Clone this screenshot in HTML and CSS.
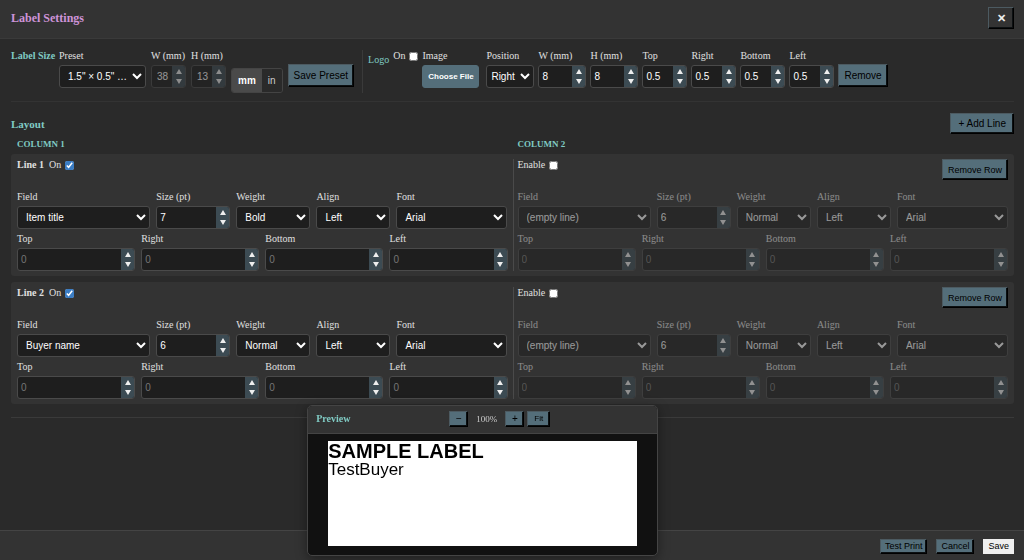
FILE: index.html
```html
<!DOCTYPE html>
<html lang="en">
<head>
    <meta charset="UTF-8">
    <meta name="viewport" content="width=device-width, initial-scale=1.0">
    <title>Label Settings</title>
    <link rel="stylesheet" href="styles.css">
</head>
<body>
    <header class="header">
        <h1>Label Settings</h1>
        <button type="button" class="btn close" aria-label="Close">✕</button>
    </header>

    <main class="content">
        <section class="toolbar">
            <h2 class="group-title">Label Size</h2>
            <div class="field preset">
                <label for="preset">Preset</label>
                <select id="preset"><option>1.5" × 0.5" (38 × 13 mm)</option></select>
            </div>
            <div class="field small disabled-input">
                <label for="labelW">W (mm)</label>
                <div class="number">
                    <input type="number" id="labelW" value="38" disabled>
                    <div class="spin"><button type="button" class="up" aria-label="Increase" disabled></button><button type="button" class="down" aria-label="Decrease" disabled></button></div>
                </div>
            </div>
            <div class="field small disabled-input">
                <label for="labelH">H (mm)</label>
                <div class="number">
                    <input type="number" id="labelH" value="13" disabled>
                    <div class="spin"><button type="button" class="up" aria-label="Increase" disabled></button><button type="button" class="down" aria-label="Decrease" disabled></button></div>
                </div>
            </div>
            <div class="units">
                <button type="button" class="active">mm</button>
                <button type="button">in</button>
            </div>
            <button type="button" class="btn tall">Save Preset</button>

            <div class="logo">
                <h2 class="logo-title">Logo</h2>
                <div class="check">
                    <label for="logoOn">On</label>
                    <input type="checkbox" id="logoOn">
                </div>
                <div class="field image">
                    <label for="logoFile">Image</label>
                    <button type="button" class="file" id="logoFile">Choose File</button>
                </div>
                <div class="field position">
                    <label for="logoPos">Position</label>
                    <select id="logoPos"><option>Right</option><option>Left</option></select>
                </div>
                <div class="logo-numbers" id="logoNumbers"></div>
                <button type="button" class="btn tall">Remove</button>
            </div>
        </section>

        <section class="layout">
            <div class="layout-head">
                <h2>Layout</h2>
                <button type="button" class="btn add">+ Add Line</button>
            </div>
            <div class="column-names">
                <h3>COLUMN 1</h3>
                <h3>COLUMN 2</h3>
            </div>
            <div class="lines" id="lines"></div>
        </section>
    </main>

    <footer class="footer">
        <button type="button" class="btn">Test Print</button>
        <button type="button" class="btn">Cancel</button>
        <button type="button" class="btn save">Save</button>
    </footer>

    <div class="preview">
        <div class="preview-head">
            <h2>Preview</h2>
            <div class="zoom">
                <button type="button" class="btn">−</button>
                <span>100%</span>
                <button type="button" class="btn">+</button>
                <button type="button" class="btn fit">Fit</button>
            </div>
        </div>
        <div class="preview-body">
            <div class="paper">
                <p class="sample-title">SAMPLE LABEL</p>
                <p class="sample-buyer">TestBuyer</p>
            </div>
        </div>
    </div>

    <script src="script.js"></script>
</body>
</html>
```
FILE: styles.css
```css
* { box-sizing: border-box; }
body { margin: 0; min-height: 100vh; display: flex; flex-direction: column; background: #2a2a2a; color: #e0e0e0; font-family: "Liberation Serif", serif; font-size: 10px; line-height: 12px; }
h1, h2, h3, p { margin: 0; }
h2 { font-size: 10px; color: #80cbc4; }
button, input, select { font-family: "Liberation Sans", Arial, sans-serif; font-size: 10px; margin: 0; }

.header { display: flex; justify-content: space-between; align-items: center; height: 39px; padding: 0 10px 2px 11px; background: #333; border-bottom: 1px solid #3a3a3a; }
.header h1 { font-size: 12px; color: #ce93d8; }

/* Buttons */
.btn { background: #546e7a; color: #000; border: 1px solid; border-color: #4c5a61 #000 #000 #4c5a61; box-shadow: inset -1px -1px #0c1012; padding: 0 5px; cursor: pointer; }
.btn.tall { height: 23px; }
.btn.add { height: 21px; padding: 0 7px; }
.btn.close { width: 26px; height: 22px; padding: 0; background: #333; color: #eee; font-size: 11px; font-weight: bold; }
.btn.remove-row { height: 21px; padding: 0 5px; font-size: 9px; }

/* Fields */
.field { display: flex; flex-direction: column; gap: 3px; min-width: 0; }
.field select, .number, .file { width: 100%; height: 23px; border: 1px solid #4a4a4a; border-radius: 3px; background: #1e1e1e; color: #fff; }
.field select { padding: 0 0 0 4px; text-overflow: ellipsis; }
.number { display: flex; overflow: hidden; }
.number input { flex: 1; width: 0; min-width: 0; padding: 0 3px; border: none; background: none; color: #fff; appearance: textfield; }
.number input::-webkit-inner-spin-button { appearance: none; }
.number input::placeholder { color: #757575; }
.spin { display: flex; flex-direction: column; width: 13px; }
.spin button { flex: 1; display: flex; align-items: center; justify-content: center; padding: 0; border: none; background: #3c4b53; }
.spin button::before { content: ""; border: 3px solid transparent; }
.spin .up::before { border-top: none; border-bottom: 5px solid #eee; }
.spin .down::before { border-bottom: none; border-top: 5px solid #eee; }
.disabled-input .number { opacity: 0.5; }
.disabled-input input { padding: 0 0 0 5px; }
.file { padding: 0; background: #546e7a; border-color: #546e7a; font-size: 8px; font-weight: bold; }
input[type="checkbox"] { width: 9px; height: 9px; accent-color: #3b7dc4; }
.check { display: flex; align-items: center; gap: 4px; height: 12px; }

/* Top bar */
.content { flex: 1; padding: 11px 10px 0 11px; }
.toolbar { display: flex; gap: 5px; height: 52px; border-bottom: 1px solid #333; }
.toolbar > .btn, .logo > .btn { margin-top: 14px; }
.group-title { width: 43px; white-space: nowrap; }
.preset { width: 87px; }
.small { width: 35px; }
.units { display: flex; height: 25px; margin-top: 18px; border: 1px solid #444; border-radius: 3px; overflow: hidden; }
.units button { padding: 0 6px; border: none; background: #2a2a2a; color: #ccc; }
.units .active { background: #4a4a4a; color: #fff; font-weight: bold; }
.logo { display: flex; gap: 4px; height: 43px; margin-left: 3px; padding-left: 5px; border-left: 1px solid #3a3a3a; }
.logo-title { padding-top: 4px; font-weight: normal; }
.image { width: 57px; margin-right: 3px; }
.position { width: 48px; }
.position select { padding: 0; }
.logo-numbers { display: flex; gap: 4px; }
.logo-numbers .field { width: 45px; }
.logo-numbers .size { width: 48px; }

/* Lines */
.layout { padding: 11px 0 13px; border-bottom: 1px solid #3a3a3a; }
.layout-head { display: flex; justify-content: space-between; align-items: center; }
.layout-head h2 { font-size: 11px; }
.column-names { display: grid; grid-template-columns: 1fr 1fr; padding: 4px 6px; }
.column-names h3 { font-size: 9px; color: #80cbc4; }
.column-names h3 + h3 { padding-left: 5px; }
.lines { display: flex; flex-direction: column; gap: 6px; }
.line { display: grid; grid-template-columns: 1fr 1fr; padding: 5px 6px; background: #333; border-radius: 3px; }
.column { padding-right: 5px; }
.column + .column { padding: 0 0 0 4px; border-left: 1px solid #4a4a4a; }
.column-head { display: flex; justify-content: space-between; align-items: flex-start; height: 32px; }
.column-head b { margin-right: 1px; }
.row { display: grid; grid-template-columns: 1.8fr 1fr 1fr 1fr 1.5fr; gap: 6px; }
.row.offsets { grid-template-columns: repeat(4, 1fr); margin-top: 4px; }
.column.off .row { opacity: 0.5; }

.footer { display: flex; justify-content: flex-end; align-items: center; gap: 9px; height: 30px; padding: 2px 10px 0; background: #333; border-top: 1px solid #444; }
.footer .btn { height: 15px; padding: 0 4px; font-size: 9px; line-height: 11px; }
.footer .save { background: #efefef; border-color: #efefef; box-shadow: none; }

/* Floating preview window */
.preview { position: fixed; left: 30%; bottom: 4px; width: 351px; border: 1px solid #444; border-radius: 5px; overflow: hidden; background: #111; box-shadow: 0 3px 12px rgba(0, 0, 0, 0.4); }
.preview-head { display: flex; align-items: center; height: 28px; padding: 0 8px 2px; background: #333; border-bottom: 1px solid #444; }
.zoom { flex: 1; display: flex; align-items: center; justify-content: center; gap: 3px; }
.zoom .btn { width: 19px; height: 16px; padding: 0; line-height: 10px; }
.zoom .fit { width: 23px; font-size: 8px; }
.zoom span { padding: 0 5px; font-size: 9px; color: #ccc; }
.preview-body { padding: 7px 20px 9px; }
.paper { height: 105px; background: #fff; color: #000; font-family: "Liberation Sans", Arial, sans-serif; }
.sample-title { font-size: 20px; line-height: 20px; font-weight: bold; }
.sample-buyer { font-size: 17px; line-height: 18px; }
```
FILE: script.js
```js
const lines = [
    { field: 'Item title', size: 7, weight: 'Bold' },
    { field: 'Buyer name', size: 6, weight: 'Normal' }
];

function numberField(id, label, value, cls) {
    const attr = value === '' ? 'placeholder="0"' : `value="${value}"`;
    return `
        <div class="field ${cls}">
            <label for="${id}">${label}</label>
            <div class="number">
                <input type="number" id="${id}" step="any" ${attr}>
                <div class="spin"><button type="button" class="up" aria-label="Increase"></button><button type="button" class="down" aria-label="Decrease"></button></div>
            </div>
        </div>`;
}

function selectField(id, label, value) {
    return `
        <div class="field">
            <label for="${id}">${label}</label>
            <select id="${id}"><option>${value}</option></select>
        </div>`;
}

function rows(id, line) {
    return `
        <div class="row">
            ${selectField(id + 'Field', 'Field', line.field)}
            ${numberField(id + 'Size', 'Size (pt)', line.size, '')}
            ${selectField(id + 'Weight', 'Weight', line.weight)}
            ${selectField(id + 'Align', 'Align', 'Left')}
            ${selectField(id + 'Font', 'Font', 'Arial')}
        </div>
        <div class="row offsets">
            ${['Top', 'Right', 'Bottom', 'Left'].map(side => numberField(id + side, side, '', '')).join('')}
        </div>`;
}

document.getElementById('lines').innerHTML = lines.map((line, i) => `
    <div class="line">
        <div class="column">
            <div class="column-head">
                <div class="check">
                    <b>Line ${i + 1}</b>
                    <label for="on${i}">On</label>
                    <input type="checkbox" id="on${i}" checked>
                </div>
            </div>
            ${rows('a' + i, line)}
        </div>
        <div class="column off">
            <div class="column-head">
                <div class="check">
                    <label for="enable${i}">Enable</label>
                    <input type="checkbox" id="enable${i}">
                </div>
                <button type="button" class="btn remove-row">Remove Row</button>
            </div>
            ${rows('b' + i, { field: '(empty line)', size: 6, weight: 'Normal' })}
        </div>
    </div>`).join('');

document.getElementById('logoNumbers').innerHTML =
    numberField('logoW', 'W (mm)', 8, 'size') +
    numberField('logoH', 'H (mm)', 8, 'size') +
    ['Top', 'Right', 'Bottom', 'Left'].map(side => numberField('logo' + side, side, 0.5, '')).join('');

// Step the number input next to the clicked arrow
document.addEventListener('click', function(event) {
    if (!event.target.matches('.spin button')) return;
    const input = event.target.closest('.number').querySelector('input');
    input.value = Number(input.value) + (event.target.className === 'up' ? 1 : -1);
});
```
